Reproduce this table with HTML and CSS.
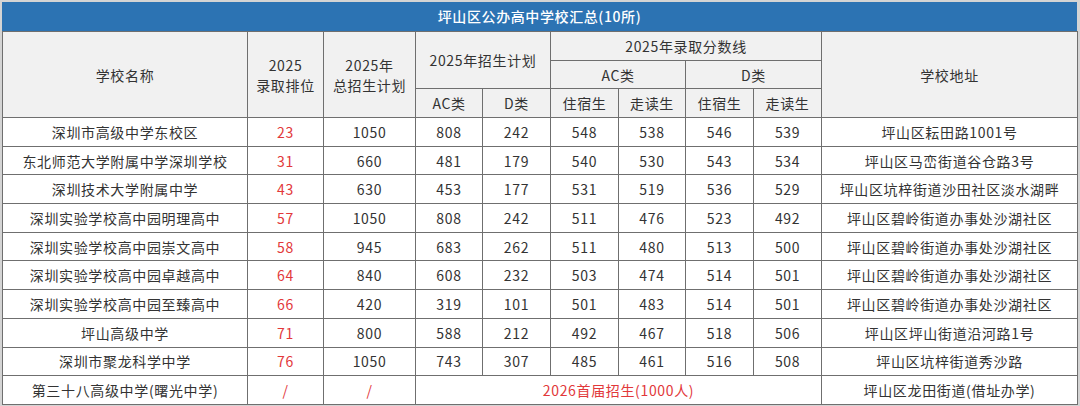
FILE: index.html
```html
<!DOCTYPE html>
<html lang="zh">
<head>
<meta charset="utf-8">
<title>坪山区公办高中学校汇总</title>
<link rel="stylesheet" href="styles.css">
</head>
<body>
<div class="frame">
  <div class="title">坪山区公办高中学校汇总(10所)</div>
  <table class="grid">
    <colgroup>
      <col class="c-name"><col class="c-rank"><col class="c-total">
      <col class="c-n1"><col class="c-n2"><col class="c-n2"><col class="c-n1"><col class="c-n2"><col class="c-n2">
      <col class="c-addr">
    </colgroup>
    <thead>
      <tr class="h1">
        <th rowspan="3">学校名称</th>
        <th rowspan="3">2025<br>录取排位</th>
        <th rowspan="3">2025年<br>总招生计划</th>
        <th rowspan="2" colspan="2">2025年招生计划</th>
        <th colspan="4">2025年录取分数线</th>
        <th rowspan="3">学校地址</th>
      </tr>
      <tr class="h2">
        <th colspan="2">AC类</th>
        <th colspan="2">D类</th>
      </tr>
      <tr class="h3">
        <th>AC类</th><th>D类</th><th>住宿生</th><th>走读生</th><th>住宿生</th><th>走读生</th>
      </tr>
    </thead>
    <tbody>
      <tr><td>深圳市高级中学东校区</td><td class="red">23</td><td>1050</td><td>808</td><td>242</td><td>548</td><td>538</td><td>546</td><td>539</td><td>坪山区耘田路1001号</td></tr>
      <tr><td>东北师范大学附属中学深圳学校</td><td class="red">31</td><td>660</td><td>481</td><td>179</td><td>540</td><td>530</td><td>543</td><td>534</td><td>坪山区马峦街道谷仓路3号</td></tr>
      <tr><td>深圳技术大学附属中学</td><td class="red">43</td><td>630</td><td>453</td><td>177</td><td>531</td><td>519</td><td>536</td><td>529</td><td>坪山区坑梓街道沙田社区淡水湖畔</td></tr>
      <tr><td>深圳实验学校高中园明理高中</td><td class="red">57</td><td>1050</td><td>808</td><td>242</td><td>511</td><td>476</td><td>523</td><td>492</td><td>坪山区碧岭街道办事处沙湖社区</td></tr>
      <tr><td>深圳实验学校高中园崇文高中</td><td class="red">58</td><td>945</td><td>683</td><td>262</td><td>511</td><td>480</td><td>513</td><td>500</td><td>坪山区碧岭街道办事处沙湖社区</td></tr>
      <tr><td>深圳实验学校高中园卓越高中</td><td class="red">64</td><td>840</td><td>608</td><td>232</td><td>503</td><td>474</td><td>514</td><td>501</td><td>坪山区碧岭街道办事处沙湖社区</td></tr>
      <tr><td>深圳实验学校高中园至臻高中</td><td class="red">66</td><td>420</td><td>319</td><td>101</td><td>501</td><td>483</td><td>514</td><td>501</td><td>坪山区碧岭街道办事处沙湖社区</td></tr>
      <tr><td>坪山高级中学</td><td class="red">71</td><td>800</td><td>588</td><td>212</td><td>492</td><td>467</td><td>518</td><td>506</td><td>坪山区坪山街道沿河路1号</td></tr>
      <tr><td>深圳市聚龙科学中学</td><td class="red">76</td><td>1050</td><td>743</td><td>307</td><td>485</td><td>461</td><td>516</td><td>508</td><td>坪山区坑梓街道秀沙路</td></tr>
      <tr><td>第三十八高级中学(曙光中学)</td><td class="red">/</td><td class="red">/</td><td colspan="6" class="red">2026首届招生(1000人)</td><td>坪山区龙田街道(借址办学)</td></tr>
    </tbody>
  </table>
</div>
</body>
</html>
```

FILE: styles.css
```css
html, body {
  margin: 0;
  padding: 0;
  background: #d4d4d4;
}
body {
  font-family: "Noto Sans CJK SC", "Noto Sans", sans-serif;
  color: #333;
}
.frame {
  width: 1075px;
  margin: 2px 0 0 2px;
  background: #fff;
}
.title {
  height: 29px;
  line-height: 29px;
  background: #2c73b3;
  color: #fff;
  text-align: center;
  font-size: 14px;
  font-weight: 500;
  letter-spacing: 0.6px;
}
.grid {
  width: 1075px;
  table-layout: fixed;
  border-collapse: collapse;
  font-size: 14px;
  letter-spacing: 0.65px;
}
.c-name { width: 245px; }
.c-rank { width: 76px; }
.c-total { width: 92px; }
.c-n1 { width: 67px; }
.c-n2 { width: 68px; }
.c-addr { width: 256px; }
.grid th, .grid td {
  border: 1px solid #6f6f6f;
  padding: 0;
  text-align: center;
  vertical-align: middle;
  white-space: nowrap;
  overflow: hidden;
}
.grid th {
  background: #f1f1f1;
  font-weight: 400;
  line-height: 20px;
}
.grid tr.h1 { height: 29px; }
.grid tr.h2 { height: 28px; }
.grid tr.h3 { height: 29px; }
.grid tbody tr { height: 28.7px; }
.grid td {
  background: #fff;
  line-height: 20px;
}
.grid .red { color: #e2383a; }
```
